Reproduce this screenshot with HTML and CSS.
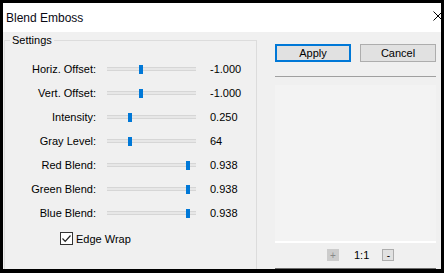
FILE: index.html
```html
<!DOCTYPE html>
<html>
<head>
<meta charset="utf-8">
<title>Blend Emboss</title>
<link rel="stylesheet" href="styles.css">
</head>
<body>

<div class="window">
  <div class="titlebar">
    <span class="title">Blend Emboss</span>
    <svg class="close" width="10" height="10" viewBox="0 0 10 10"><path d="M0.5 0.5 L9.5 9.5 M9.5 0.5 L0.5 9.5" stroke="#000" stroke-width="1" fill="none"/></svg>
  </div>

  <div class="content">
    <fieldset class="settings">
      <legend>Settings</legend>
      <div class="rows">
        <span class="lbl">Horiz. Offset:</span>
        <div class="track"><span class="thumb" style="left:32px"></span></div>
        <span class="val">-1.000</span>

        <span class="lbl">Vert. Offset:</span>
        <div class="track"><span class="thumb" style="left:32px"></span></div>
        <span class="val">-1.000</span>

        <span class="lbl">Intensity:</span>
        <div class="track"><span class="thumb" style="left:21px"></span></div>
        <span class="val">0.250</span>

        <span class="lbl">Gray Level:</span>
        <div class="track"><span class="thumb" style="left:21px"></span></div>
        <span class="val">64</span>

        <span class="lbl">Red Blend:</span>
        <div class="track"><span class="thumb" style="left:79px"></span></div>
        <span class="val">0.938</span>

        <span class="lbl">Green Blend:</span>
        <div class="track"><span class="thumb" style="left:79px"></span></div>
        <span class="val">0.938</span>

        <span class="lbl">Blue Blend:</span>
        <div class="track"><span class="thumb" style="left:79px"></span></div>
        <span class="val">0.938</span>
      </div>
      <label class="check">
        <span class="box"><svg width="11" height="11" viewBox="0 0 11 11"><path d="M1.5 5.5 L4.2 8.3 L9.5 2.5" stroke="#222" stroke-width="1.2" fill="none"/></svg></span>
        Edge Wrap
      </label>
    </fieldset>

    <div class="side">
      <div class="buttons">
        <button class="btn default">Apply</button>
        <button class="btn">Cancel</button>
      </div>
      <div class="sep"></div>
      <div class="preview"></div>
      <div class="zoom">
        <span class="zbtn plus">+</span>
        <span class="ratio">1:1</span>
        <span class="zbtn minus">-</span>
      </div>
      <div class="edge"></div>
    </div>
  </div>
</div>

</body>
</html>
```

FILE: styles.css
```css
body, html{
	margin:0px;
	padding:0px;
	background:#000;
	font-family:"Liberation Sans", Arial, sans-serif;
	font-size:11px;
	color:#000;
}
.window{
	margin:3px 0 0 3px;
	width:438px;
	height:266px;
	overflow:hidden;
	background:#f0f0f0;
	display:flex;
	flex-direction:column;
}
.titlebar{
	height:29px;
	background:#fff;
	display:flex;
	align-items:center;
	justify-content:space-between;
	padding-left:3px;
}
.title{
	font-size:12px;
	color:#0a0a14;
}
.close{
	margin-right:-2px;
	margin-top:-3px;
}
.content{
	flex:1;
	display:flex;
}
.settings{
	margin:1px 0 0 1px;
	padding:0px;
	width:251px;
	border:1px solid #dcdcdc;
	border-bottom:none;
	min-width:0;
}
.settings legend{
	margin-left:5px;
	padding:0 2px;
	line-height:14px;
}
.rows{
	display:grid;
	grid-template-columns:91px 89px 1fr;
	column-gap:11px;
	grid-auto-rows:24px;
	align-items:center;
	padding-top:10px;
}
.lbl{
	text-align:right;
}
.val{
	margin-left:3px;
}
.track{
	position:relative;
	height:4px;
	background:#e7e7e7;
	border-top:1px solid #d6d6d6;
	border-bottom:1px solid #d6d6d6;
	box-sizing:border-box;
}
.thumb{
	position:absolute;
	top:-3px;
	width:4px;
	height:9px;
	background:#0078d7;
}
.check{
	display:flex;
	align-items:center;
	gap:3px;
	margin:7px 0 0 55px;
}
.box{
	width:11px;
	height:11px;
	border:1px solid #333;
	background:#fff;
	display:flex;
}
.side{
	margin-left:18px;
	width:161px;
	display:flex;
	flex-direction:column;
}
.buttons{
	display:flex;
	gap:9px;
	margin-top:12px;
}
.btn{
	width:76px;
	height:18px;
	margin:0;
	padding:0;
	font-family:"Liberation Sans", Arial, sans-serif;
	font-size:11px;
	color:#000;
	background:#e1e1e1;
	border:1px solid #adadad;
}
.btn.default{
	border:2px solid #0078d7;
}
.sep{
	margin-top:14px;
	border-top:1px solid #a0a0a0;
}
.preview{
	margin-top:8px;
	height:156px;
	background:#f3f3f3;
	border-bottom:2px solid #fff;
}
.zoom{
	display:flex;
	align-items:center;
	margin:6px 0 0 52px;
	height:12px;
}
.zbtn{
	width:12px;
	height:12px;
	box-sizing:border-box;
	display:flex;
	align-items:center;
	justify-content:center;
	font-size:10px;
}
.plus{
	background:#cccccc;
	color:#888;
}
.minus{
	background:#e1e1e1;
	border:1px solid #adadad;
}
.ratio{
	margin:0 13px 0 15px;
}
.edge{
	margin-top:auto;
	height:1px;
	background:#6d6d6d;
}
```
